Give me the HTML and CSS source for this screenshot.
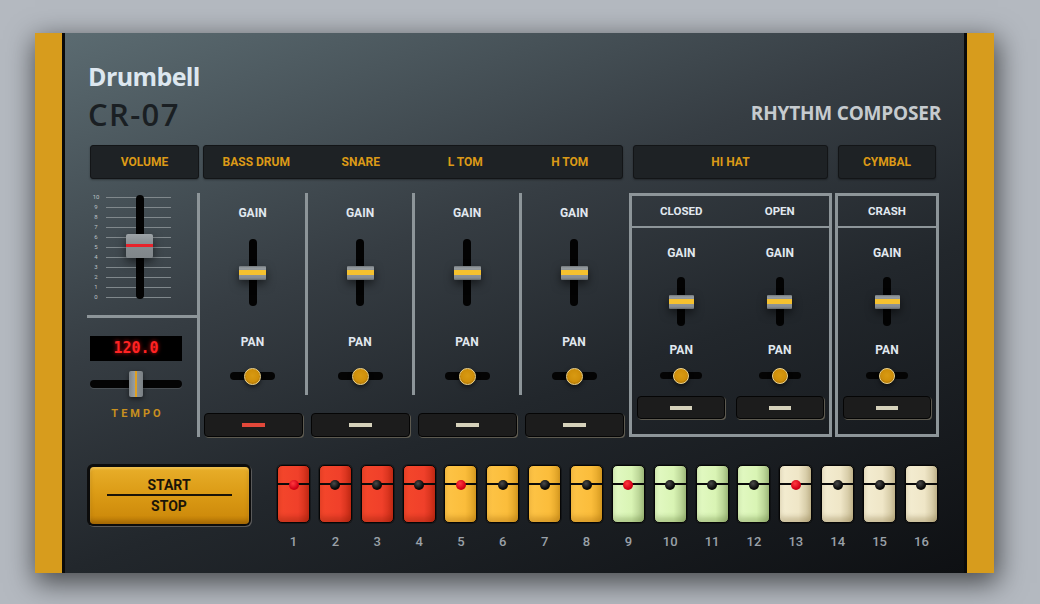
FILE: index.html
```html
<!DOCTYPE html>
<html>
<head>
<meta charset="utf-8">
<title>Drumbell CR-07</title>
<link rel="stylesheet" href="styles.css">
</head>
<body>
<div class="device">
  <div class="side"></div>
  <div class="panel">
    <header class="head">
      <div class="brand">
        <div class="maker">Drumbell</div>
        <div class="model">CR-07</div>
      </div>
      <div class="tagline">RHYTHM COMPOSER</div>
    </header>

    <div class="labels">
      <div class="lbl lbl-vol">VOLUME</div>
      <div class="lbl lbl-drums"><span>BASS DRUM</span><span>SNARE</span><span>L TOM</span><span>H TOM</span></div>
      <div class="lbl lbl-hat">HI HAT</div>
      <div class="lbl lbl-cym">CYMBAL</div>
    </div>

    <div class="mixer">
      <div class="vol">
        <div class="scale">
          <div class="tick"><b>10</b><i></i></div>
          <div class="tick"><b>9</b><i></i></div>
          <div class="tick"><b>8</b><i></i></div>
          <div class="tick"><b>7</b><i></i></div>
          <div class="tick"><b>6</b><i></i></div>
          <div class="tick"><b>5</b><i></i></div>
          <div class="tick"><b>4</b><i></i></div>
          <div class="tick"><b>3</b><i></i></div>
          <div class="tick"><b>2</b><i></i></div>
          <div class="tick"><b>1</b><i></i></div>
          <div class="tick"><b>0</b><i></i></div>
          <div class="vtrack"></div>
          <div class="vknob"></div>
        </div>
        <div class="sep"></div>
        <div class="display">120.0</div>
        <div class="tslider"><div class="tknob"></div></div>
        <div class="tempo">TEMPO</div>
      </div>

      <div class="ch ch1">
        <div class="strip">
          <div class="cap">GAIN</div>
          <div class="fader"><div class="fknob"></div></div>
          <div class="cap pcap">PAN</div>
          <div class="pan"><div class="pknob"></div></div>
        </div>
        <div class="btn"><i class="led led-red"></i></div>
      </div>
      <div class="ch">
        <div class="strip">
          <div class="cap">GAIN</div>
          <div class="fader"><div class="fknob"></div></div>
          <div class="cap pcap">PAN</div>
          <div class="pan"><div class="pknob"></div></div>
        </div>
        <div class="btn"><i class="led"></i></div>
      </div>
      <div class="ch">
        <div class="strip">
          <div class="cap">GAIN</div>
          <div class="fader"><div class="fknob"></div></div>
          <div class="cap pcap">PAN</div>
          <div class="pan"><div class="pknob"></div></div>
        </div>
        <div class="btn"><i class="led"></i></div>
      </div>
      <div class="ch">
        <div class="strip">
          <div class="cap">GAIN</div>
          <div class="fader"><div class="fknob"></div></div>
          <div class="cap pcap">PAN</div>
          <div class="pan"><div class="pknob"></div></div>
        </div>
        <div class="btn"><i class="led"></i></div>
      </div>

      <div class="group hat">
        <div class="ghead"><span>CLOSED</span><span>OPEN</span></div>
        <div class="gbody">
          <div class="gch">
            <div class="cap">GAIN</div>
            <div class="fader"><div class="fknob"></div></div>
            <div class="cap pcap">PAN</div>
            <div class="pan"><div class="pknob"></div></div>
            <div class="btn"><i class="led"></i></div>
          </div>
          <div class="gch">
            <div class="cap">GAIN</div>
            <div class="fader"><div class="fknob"></div></div>
            <div class="cap pcap">PAN</div>
            <div class="pan"><div class="pknob"></div></div>
            <div class="btn"><i class="led"></i></div>
          </div>
        </div>
      </div>

      <div class="group crash">
        <div class="ghead one"><span>CRASH</span></div>
        <div class="gbody one">
          <div class="gch">
            <div class="cap">GAIN</div>
            <div class="fader"><div class="fknob"></div></div>
            <div class="cap pcap">PAN</div>
            <div class="pan"><div class="pknob"></div></div>
            <div class="btn"><i class="led"></i></div>
          </div>
        </div>
      </div>
    </div>

    <div class="seq">
      <div class="startstop">
        <div class="ssin">
          <span>START</span>
          <i class="ssline"></i>
          <span>STOP</span>
        </div>
      </div>
      <div class="steps">
        <div class="step"><div class="pad red"><i class="dot on"></i></div><span class="num">1</span></div>
        <div class="step"><div class="pad red"><i class="dot"></i></div><span class="num">2</span></div>
        <div class="step"><div class="pad red"><i class="dot"></i></div><span class="num">3</span></div>
        <div class="step"><div class="pad red"><i class="dot"></i></div><span class="num">4</span></div>
        <div class="step"><div class="pad orange"><i class="dot on"></i></div><span class="num">5</span></div>
        <div class="step"><div class="pad orange"><i class="dot"></i></div><span class="num">6</span></div>
        <div class="step"><div class="pad orange"><i class="dot"></i></div><span class="num">7</span></div>
        <div class="step"><div class="pad orange"><i class="dot"></i></div><span class="num">8</span></div>
        <div class="step"><div class="pad green"><i class="dot on"></i></div><span class="num">9</span></div>
        <div class="step"><div class="pad green"><i class="dot"></i></div><span class="num">10</span></div>
        <div class="step"><div class="pad green"><i class="dot"></i></div><span class="num">11</span></div>
        <div class="step"><div class="pad green"><i class="dot"></i></div><span class="num">12</span></div>
        <div class="step"><div class="pad beige"><i class="dot on"></i></div><span class="num">13</span></div>
        <div class="step"><div class="pad beige"><i class="dot"></i></div><span class="num">14</span></div>
        <div class="step"><div class="pad beige"><i class="dot"></i></div><span class="num">15</span></div>
        <div class="step"><div class="pad beige"><i class="dot"></i></div><span class="num">16</span></div>
      </div>
    </div>
  </div>
  <div class="side"></div>
</div>
</body>
</html>
```
FILE: styles.css
```css
* { box-sizing: border-box; margin: 0; padding: 0; }
html, body { width: 1040px; height: 604px; overflow: hidden; }
body {
  background: #b4b9c0;
  font-family: Roboto, "Liberation Sans", sans-serif;
}

.device {
  margin: 33px 0 0 35px;
  width: 959px;
  height: 540px;
  display: flex;
  box-shadow: 2px 8px 26px 2px rgba(0, 0, 0, 0.6);
}
.side { width: 27px; background: #d79c1d; }
.panel {
  flex: 1;
  border-left: 3px solid #0a0a0a;
  border-right: 3px solid #0a0a0a;
  background: linear-gradient(160deg, #5b6b71 0%, #363d43 38%, #22272c 62%, #0e1013 100%);
  padding-left: 22px;
  display: flex;
  flex-direction: column;
}

/* header */
.head {
  height: 112px;
  padding: 28px 23px 0 1px;
  display: flex;
  justify-content: space-between;
  align-items: flex-start;
}
.maker {
  font-family: "Open Sans", sans-serif;
  font-weight: 700;
  font-size: 25px;
  line-height: 30px;
  color: #dde7ef;
  letter-spacing: -0.6px;
}
.model {
  margin-top: 6px;
  font-family: "Open Sans", sans-serif;
  font-weight: 600;
  font-size: 31px;
  line-height: 34px;
  color: #1a1f23;
  letter-spacing: 1.4px;
}
.tagline {
  margin-top: 39px;
  font-family: "Open Sans", sans-serif;
  font-weight: 700;
  font-size: 19px;
  line-height: 26px;
  color: #c6cbcf;
  letter-spacing: -0.2px;
}

/* labels row */
.labels {
  display: flex;
  height: 34px;
  margin-left: 3px;
}
.lbl {
  background: #1e2225;
  border: 1px solid #131517;
  border-radius: 3px;
  box-shadow: 0 1px 2px rgba(0, 0, 0, 0.35);
  color: #dc9a17;
  font-weight: 700;
  font-size: 12px;
  display: flex;
  align-items: center;
  justify-content: center;
}
.lbl-vol { width: 109px; }
.lbl-drums {
  width: 420px;
  margin-left: 4px;
  display: grid;
  grid-template-columns: repeat(4, 1fr);
  text-align: center;
}
.lbl-hat { width: 195px; margin-left: 10px; }
.lbl-cym { width: 98px; margin-left: 10px; }

/* mixer */
.mixer {
  display: flex;
  height: 244px;
  margin-top: 14px;
}
.vol {
  width: 113px;
  border-right: 3px solid #8d9599;
  display: flex;
  flex-direction: column;
}
.scale {
  position: relative;
  height: 110px;
  margin-top: -1px;
}
.tick {
  display: flex;
  align-items: center;
  height: 10px;
}
.tick b {
  width: 18px;
  text-align: center;
  font-size: 6px;
  line-height: 10px;
  font-weight: 400;
  color: #bcc2c6;
}
.tick i {
  width: 65px;
  height: 1px;
  margin-left: 1px;
  background: #80888c;
}
.vtrack {
  position: absolute;
  left: 49px;
  top: 3px;
  width: 8px;
  height: 104px;
  border-radius: 4px;
  background: #030303;
}
.vknob {
  position: absolute;
  left: 39px;
  top: 42px;
  width: 27px;
  height: 24px;
  border-radius: 2px;
  background: linear-gradient(#9da3a7, #868c90 45%, #80868a);
  box-shadow: 0 4px 10px rgba(0, 0, 0, 0.55);
}
.vknob::after {
  content: "";
  position: absolute;
  left: 0;
  right: 0;
  top: 10px;
  height: 3px;
  background: #e8222b;
}
.sep {
  margin-top: 13px;
  width: 110px;
  height: 3px;
  background: #8d9599;
}
.display {
  margin: 18px 0 0 3px;
  width: 92px;
  height: 25px;
  background: #000;
  color: #ff2323;
  font-family: "DejaVu Sans Mono", "Liberation Mono", monospace;
  font-weight: 700;
  font-size: 15px;
  line-height: 25px;
  text-align: center;
  text-shadow: 0 0 4px rgba(255, 20, 20, 0.8);
}
.tslider {
  position: relative;
  margin: 10px 0 0 3px;
  width: 92px;
  height: 26px;
}
.tslider::before {
  content: "";
  position: absolute;
  left: 0;
  right: 0;
  top: 9px;
  height: 8px;
  border-radius: 4px;
  background: #040404;
  box-shadow: 0 1px 0 rgba(255, 255, 255, 0.12);
}
.tknob {
  position: absolute;
  left: 39px;
  top: 0;
  width: 14px;
  height: 26px;
  border-radius: 2px;
  background: linear-gradient(90deg, #7e8488, #979da1 40%, #e0a020 40%, #e0a020 55%, #8a9094 55%, #7a8084);
  box-shadow: 0 2px 5px rgba(0, 0, 0, 0.5);
}
.tempo {
  margin: 10px 0 0 3px;
  width: 92px;
  padding-left: 3px;
  text-align: center;
  font-weight: 700;
  font-size: 11px;
  line-height: 13px;
  letter-spacing: 3px;
  color: #c8901f;
}

.ch { width: 107px; }
.ch1 { width: 105px; }
.strip {
  height: 202px;
  border-left: 3px solid #8d9599;
  padding-top: 13px;
  display: flex;
  flex-direction: column;
  align-items: center;
}
.ch1 .strip { border-left: 0; }
.cap {
  font-weight: 700;
  font-size: 12px;
  line-height: 14px;
  color: #e1e8ef;
}
.fader {
  position: relative;
  margin-top: 19px;
  width: 8px;
  height: 67px;
  border-radius: 4px;
  background: #030303;
}
.fknob {
  position: absolute;
  left: -9.5px;
  top: 27px;
  width: 27px;
  height: 14px;
  border-radius: 1px;
  background: linear-gradient(#707679 0, #979da1 2px, #8e9498 4px, #f5c12f 4px, #f5c12f 9px, #8e9498 9px, #868c90 12px, #65696c 14px);
  box-shadow: 0 4px 10px rgba(0, 0, 0, 0.55);
}
.pcap { margin-top: 29px; }
.pan {
  position: relative;
  margin-top: 23px;
  width: 45px;
  height: 8px;
  border-radius: 4px;
  background: #040404;
}
.pknob {
  position: absolute;
  left: 14px;
  top: -4.5px;
  width: 17px;
  height: 17px;
  border-radius: 50%;
  background: radial-gradient(circle at 50% 45%, #d89a12 0, #cf8f0a 55%, #b57a06 70%);
  border: 1.5px solid #f0d68e;
  box-shadow: 0 2px 4px rgba(0, 0, 0, 0.55);
}
.btn {
  margin: 18px 0 0 6px;
  width: 99px;
  height: 24px;
  border: 1px solid #050505;
  border-radius: 4px;
  background: #1c1c1c;
  box-shadow: 1px 1px 0 #5d5a50;
  display: flex;
  align-items: center;
  justify-content: center;
}
.ch1 .btn { margin-left: 4px; }
.led {
  width: 23px;
  height: 4px;
  background: #d6d2bb;
}
.led-red { background: #e2483a; }

/* groups */
.group {
  margin-left: 3px;
  border: 3px solid #8d9599;
  display: flex;
  flex-direction: column;
}
.hat { width: 203px; }
.crash { width: 104px; }
.ghead {
  height: 32px;
  border-bottom: 2px solid #8d9599;
  display: grid;
  grid-template-columns: 1fr 1fr;
  align-items: center;
  text-align: center;
  font-weight: 700;
  font-size: 11.5px;
  line-height: 14px;
  color: #e1e8ef;
}
.gbody {
  flex: 1;
  display: grid;
  grid-template-columns: 1fr 1fr;
}
.ghead.one, .gbody.one { grid-template-columns: 1fr; }
.gch {
  padding-top: 18px;
  display: flex;
  flex-direction: column;
  align-items: center;
}
.gch .fader { margin-top: 17px; height: 49px; }
.gch .fknob { left: -8.5px; top: 18px; width: 25px; }
.gch .pcap { margin-top: 17px; }
.gch .pan { margin-top: 15px; width: 42px; height: 7px; }
.gch .pknob { left: 13px; top: -4.5px; width: 16px; height: 16px; }
.gch .btn { margin: 17px 0 0 0; width: 88px; height: 23px; }
.gch .led { width: 22px; }

/* sequencer */
.seq {
  display: flex;
  align-items: flex-start;
  margin-top: 27px;
}
.startstop {
  width: 164px;
  height: 62px;
  padding: 2.5px;
  border-radius: 6px;
  background: #0c0c0c;
  box-shadow: 1px 1px 0 #5a5a5a;
}
.ssin {
  height: 100%;
  border-radius: 4px;
  background: linear-gradient(#e8ae2a, #dc9c16 45%, #cf8c0c 85%, #b87806);
  box-shadow: inset 0 2px 2px rgba(255, 230, 150, 0.35), inset 0 -3px 4px rgba(120, 70, 0, 0.35);
  padding-top: 10px;
  display: flex;
  flex-direction: column;
  align-items: center;
  font-weight: 700;
  font-size: 14px;
  line-height: 16px;
  color: #1a1408;
}
.ssline {
  display: block;
  width: 125px;
  height: 2px;
  margin: 1px 0 2px;
  background: #1a1408;
}
.steps {
  margin: 1px 0 0 26px;
  width: 661px;
  display: flex;
  justify-content: space-between;
}
.step {
  width: 33px;
  display: flex;
  flex-direction: column;
  align-items: center;
}
.pad {
  position: relative;
  width: 33px;
  height: 58px;
  border: 1px solid #060606;
  border-radius: 5px;
}
.pad::before {
  content: "";
  position: absolute;
  left: 0;
  right: 0;
  top: 17px;
  height: 2px;
  background: #0b0b0b;
}
.dot {
  position: absolute;
  left: 50%;
  top: 13.5px;
  width: 10px;
  height: 10px;
  margin-left: -5px;
  border-radius: 50%;
  background: radial-gradient(circle at 40% 35%, #4a4a4a, #0a0a0a 60%);
}
.dot.on { background: radial-gradient(circle at 40% 35%, #ff3a40, #d40016 60%, #a0000e); }
.red {
  background: linear-gradient(90deg, #f4472b 0%, #f0402a 65%, #c82c16 100%);
  box-shadow: 0 0 0 1px rgba(0, 0, 0, 0.3), inset 0 -5px 5px rgba(120, 20, 0, 0.3);
}
.orange {
  background: linear-gradient(90deg, #fdc447 0%, #fbbd3b 65%, #dca024 100%);
  box-shadow: 0 0 0 1px rgba(0, 0, 0, 0.3), inset 0 -5px 5px rgba(150, 90, 0, 0.3);
}
.green {
  background: linear-gradient(90deg, #e3f9c4 0%, #d9f4b4 60%, #a9c285 100%);
  box-shadow: 0 0 0 1px rgba(0, 0, 0, 0.3), inset 0 -5px 5px rgba(80, 110, 40, 0.3);
}
.beige {
  background: linear-gradient(90deg, #f4edd2 0%, #efe6c7 60%, #c9bd96 100%);
  box-shadow: 0 0 0 1px rgba(0, 0, 0, 0.3), inset 0 -5px 5px rgba(120, 100, 50, 0.3);
}
.num {
  margin-top: 11px;
  font-weight: 500;
  font-size: 13px;
  line-height: 15px;
  color: #9aa1a8;
}
```
